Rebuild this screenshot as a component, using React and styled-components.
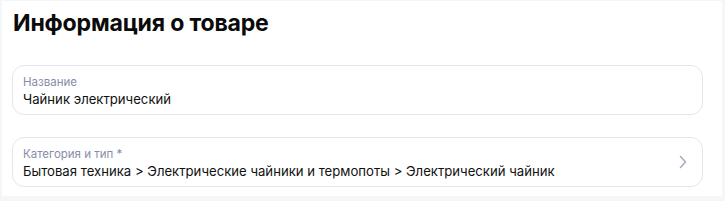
import styled, { createGlobalStyle } from "styled-components";

const GlobalStyle = createGlobalStyle`
  html, body {
    margin: 0;
    padding: 0;
    background: #f5f6f8;
  }
  body {
    font-family: Inter, "Noto Sans", sans-serif;
    color: #111111;
  }
`;

const Page = styled.div`
  width: 725px;
  height: 201px;
  padding: 1px 3px 5px 2px;
  box-sizing: border-box;
`;

const Card = styled.section`
  background: #ffffff;
  height: 100%;
  box-sizing: border-box;
  padding: 5px 19px 0 10px;
  display: flex;
  flex-direction: column;
`;

const Title = styled.h2`
  margin: 0 0 0 1px;
  font-size: 23.1px;
  line-height: 34px;
  font-weight: 700;
  color: #0b0b0b;
  letter-spacing: -0.2px;
`;

const Fields = styled.div`
  margin-top: 25px;
  display: flex;
  flex-direction: column;
  gap: 22px;
`;

const Field = styled.div`
  height: 50px;
  box-sizing: border-box;
  border: 1px solid #e2e7ee;
  border-radius: 12px;
  padding: 3px 10px 0 10px;
  display: flex;
  align-items: center;
  gap: 12px;
  cursor: ${(p) => (p.$clickable ? "pointer" : "text")};
`;

const FieldBody = styled.div`
  flex: 1;
  display: flex;
  flex-direction: column;
  min-width: 0;
`;

const Label = styled.span`
  font-size: 11.5px;
  line-height: 15px;
  color: #878ca9;
`;

const Value = styled.span`
  font-size: 13.15px;
  line-height: 19px;
  color: #111111;
  white-space: nowrap;
`;

const Chevron = styled.svg`
  width: 16px;
  height: 16px;
  flex: none;
  margin-right: 1px;
  margin-top: -4px;
`;

function TextField({ label, value, arrow }) {
  return (
    <Field $clickable={arrow}>
      <FieldBody>
        <Label>{label}</Label>
        <Value>{value}</Value>
      </FieldBody>
      {arrow && (
        <Chevron viewBox="0 0 16 16" fill="none">
          <path
            d="M5.5 2.5 L10.5 8 L5.5 13.5"
            stroke="#a3afc2"
            strokeWidth="1.6"
            strokeLinecap="round"
            strokeLinejoin="round"
          />
        </Chevron>
      )}
    </Field>
  );
}

export default function App() {
  return (
    <>
      <GlobalStyle />
      <Page>
        <Card>
          <Title>Информация о товаре</Title>
          <Fields>
            <TextField label="Название" value="Чайник электрический" />
            <TextField
              label="Категория и тип *"
              value="Бытовая техника > Электрические чайники и термопоты > Электрический чайник"
              arrow
            />
          </Fields>
        </Card>
      </Page>
    </>
  );
}
